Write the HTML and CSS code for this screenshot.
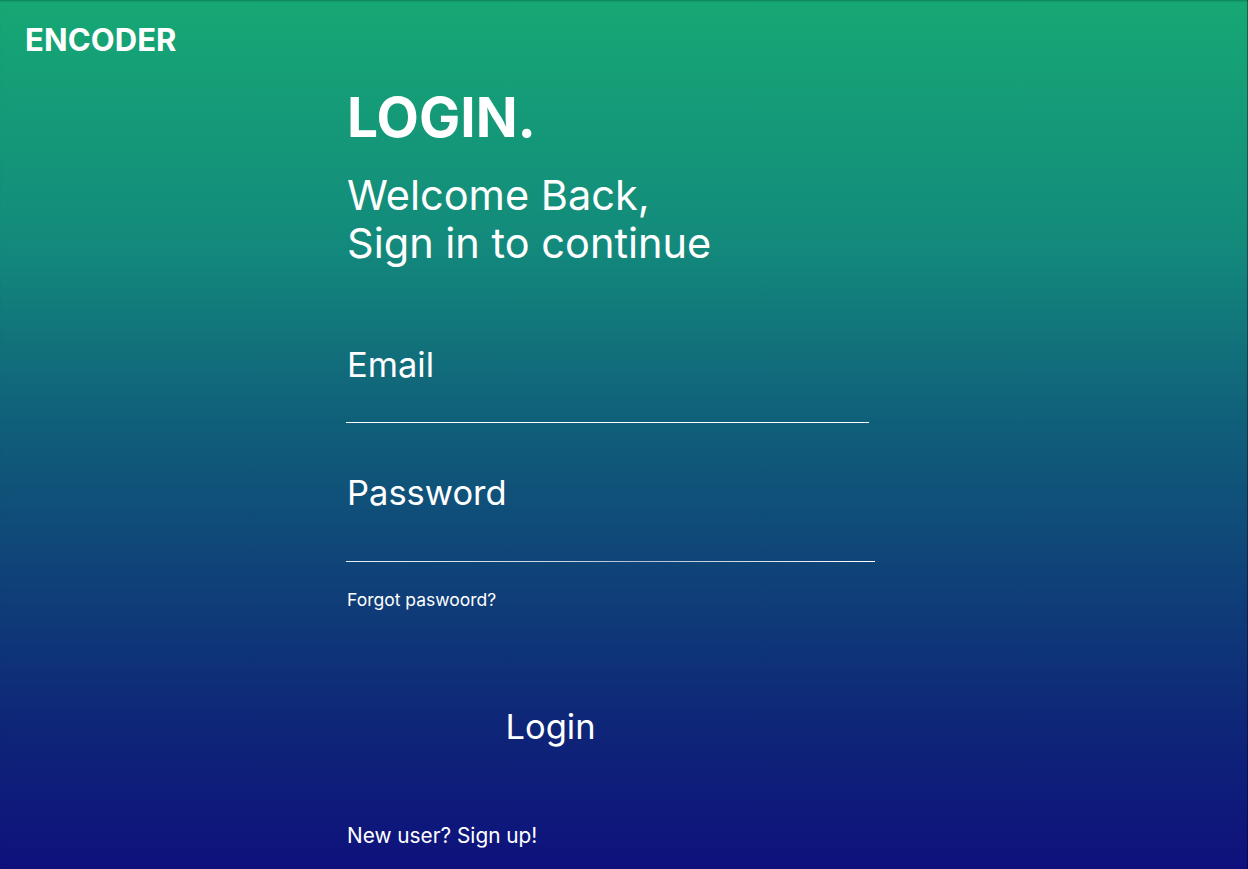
FILE: index.html
```html
<!DOCTYPE html>
<html lang="en">
<head>
<meta charset="utf-8">
<title>Encoder - Login</title>
<link rel="stylesheet" href="styles.css">
</head>
<body>
<div class="page">
  <header class="brand">ENCODER</header>
  <main class="login">
    <h1 class="title">LOGIN.</h1>
    <p class="welcome">Welcome Back,<br>Sign in to continue</p>
    <form class="form">
      <label class="field">
        <span class="field-label">Email</span>
        <span class="field-line email-line"></span>
      </label>
      <label class="field field-pw">
        <span class="field-label">Password</span>
        <span class="field-line pw-line"></span>
      </label>
      <a class="forgot">Forgot paswoord?</a>
      <div class="btn-row"><span class="login-btn">Login</span></div>
      <a class="signup">New user? Sign up!</a>
    </form>
  </main>
</div>
</body>
</html>
```

FILE: styles.css
```css
html, body {
  margin: 0;
  padding: 0;
  height: 100%;
}
body {
  font-family: Inter, "Noto Sans", sans-serif;
  color: #ffffff;
  overflow: hidden;
}
.page {
  height: 869px;
  box-sizing: border-box;
  background: linear-gradient(180deg, #16a874 0%, #138a7c 28%, #10607a 48%, #0f3f78 68%, #0e2578 84%, #0e117c 100%);
  box-shadow: inset 0 2px 2px -1px rgba(0,0,0,0.25), inset -1px 0 0 rgba(0,0,0,0.35);
  display: flex;
  flex-direction: column;
}
.brand {
  font-weight: 700;
  font-size: 31px;
  letter-spacing: 0.1px;
  padding: 22px 0 0 25px;
  line-height: 36px;
}
.login {
  margin-left: 346px;
  width: 530px;
  display: flex;
  flex-direction: column;
}
.title {
  margin: 25px 0 0 1px;
  font-size: 55px;
  font-weight: 700;
  line-height: 68px;
}
.welcome {
  margin: 20px 0 0 1px;
  font-size: 41.5px;
  line-height: 48px;
  font-weight: 400;
}
.form {
  display: flex;
  flex-direction: column;
  margin-top: 78px;
}
.field {
  display: flex;
  flex-direction: column;
}
.field-label {
  font-size: 34.5px;
  line-height: 40px;
  padding-left: 1px;
}
.field-line {
  display: block;
  height: 1px;
  background: #ffffff;
}
.email-line {
  margin-top: 37px;
  width: 523px;
}
.field-pw {
  margin-top: 50px;
}
.pw-line {
  margin-top: 48px;
  width: 529px;
  background: linear-gradient(90deg, #e8eef4 0%, #c9d6e4 40%, #aebfd3 55%, #ffffff 100%);
}
.forgot {
  margin-top: 28px;
  font-size: 17.5px;
  line-height: 20px;
  padding-left: 1px;
}
.btn-row {
  margin-top: 97px;
  width: 409px;
  display: flex;
  justify-content: center;
}
.login-btn {
  font-size: 34.5px;
  line-height: 40px;
}
.signup {
  margin-top: 77px;
  font-size: 20.8px;
  line-height: 24px;
  padding-left: 1px;
}
```
